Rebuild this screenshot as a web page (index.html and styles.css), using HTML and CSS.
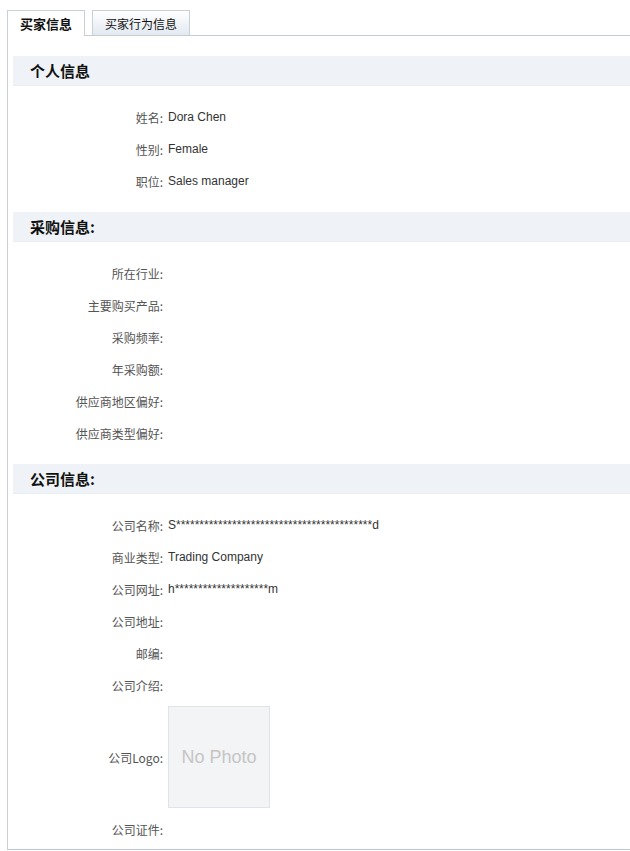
FILE: index.html
```html
<!DOCTYPE html>
<html lang="zh-CN">
<head>
  <meta charset="UTF-8" />
  <title>买家信息</title>
  <link rel="stylesheet" href="styles.css">
</head>
<body>
  <!-- Tabs -->
  <div class="tabs">
    <span class="tab active">买家信息</span>
    <span class="tab">买家行为信息</span>
  </div>
  <div class="panel">
    <!-- 个人信息 -->
    <div class="section-title">个人信息</div>
    <ul class="info-list">
      <li><span class="label">姓名:</span><span class="value">Dora Chen</span></li>
      <li><span class="label">性别:</span><span class="value">Female</span></li>
      <li><span class="label">职位:</span><span class="value">Sales manager</span></li>
    </ul>
    <!-- 采购信息 -->
    <div class="section-title">采购信息:</div>
    <ul class="info-list">
      <li><span class="label">所在行业:</span><span class="value"></span></li>
      <li><span class="label">主要购买产品:</span><span class="value"></span></li>
      <li><span class="label">采购频率:</span><span class="value"></span></li>
      <li><span class="label">年采购额:</span><span class="value"></span></li>
      <li><span class="label">供应商地区偏好:</span><span class="value"></span></li>
      <li><span class="label">供应商类型偏好:</span><span class="value"></span></li>
    </ul>
    <!-- 公司信息 -->
    <div class="section-title">公司信息:</div>
    <ul class="info-list last">
      <li><span class="label">公司名称:</span><span class="value">S******************************************d</span></li>
      <li><span class="label">商业类型:</span><span class="value">Trading Company</span></li>
      <li><span class="label">公司网址:</span><span class="value">h********************m</span></li>
      <li><span class="label">公司地址:</span><span class="value"></span></li>
      <li><span class="label">邮编:</span><span class="value"></span></li>
      <li><span class="label">公司介绍:</span><span class="value"></span></li>
      <li class="logo-row"><span class="label">公司Logo:</span><span class="value"><span class="no-photo">No Photo</span></span></li>
      <li><span class="label">公司证件:</span><span class="value"></span></li>
    </ul>
  </div>
</body>
</html>
```

FILE: styles.css
```css
/* Global */
body {
  margin: 0;
  padding: 10px 0 0 7px;
  font-family: "Liberation Sans", Arial, "Noto Sans CJK SC", sans-serif;
  font-size: 12px;
  color: #333;
  background: #fff;
  overflow: hidden;
}
/* Tabs */
.tabs {
  display: flex;
  gap: 7px;
  height: 25px;
  border-bottom: 1px solid #c5ccd3;
}
.tab {
  display: flex;
  align-items: center;
  justify-content: center;
  height: 24px;
  padding: 0 12px;
  border: 1px solid #c9d0d6;
  border-bottom: none;
  background: linear-gradient(#ffffff, #e2e9f1);
  color: #111;
}
.tab.active {
  height: 25px;
  margin-bottom: -1px;
  background: #fff;
  font-weight: bold;
  font-size: 13px;
  padding: 0 12px;
  color: #111;
}
/* Panel */
.panel {
  border-left: 1px solid #c9cfd5;
  border-bottom: 1px solid #b9c8d4;
  padding: 20px 0 0 5px;
}
.section-title {
  height: 30px;
  line-height: 30px;
  padding-left: 17px;
  background: #eff3f7;
  border-bottom: 1px solid #e9eef2;
  box-sizing: border-box;
  font-size: 15px;
  font-weight: bold;
  color: #111;
  font-family: "Noto Sans CJK SC", sans-serif;
}
.info-list {
  list-style: none;
  margin: 0;
  padding: 15px 0;
}
.info-list.last {
  padding-bottom: 4px;
}
.info-list li {
  display: flex;
  align-items: center;
  height: 32px;
}
.label {
  width: 150px;
  text-align: right;
  color: #555;
  font-family: "Noto Sans CJK SC", sans-serif;
}
.value {
  margin-left: 5px;
  color: #333;
}
.info-list li.logo-row {
  height: 112px;
}
.no-photo {
  display: flex;
  align-items: center;
  justify-content: center;
  width: 100px;
  height: 100px;
  background: #f3f4f6;
  border: 1px solid #dfe4ea;
  color: #c5c5c5;
  font-size: 18px;
}
```
